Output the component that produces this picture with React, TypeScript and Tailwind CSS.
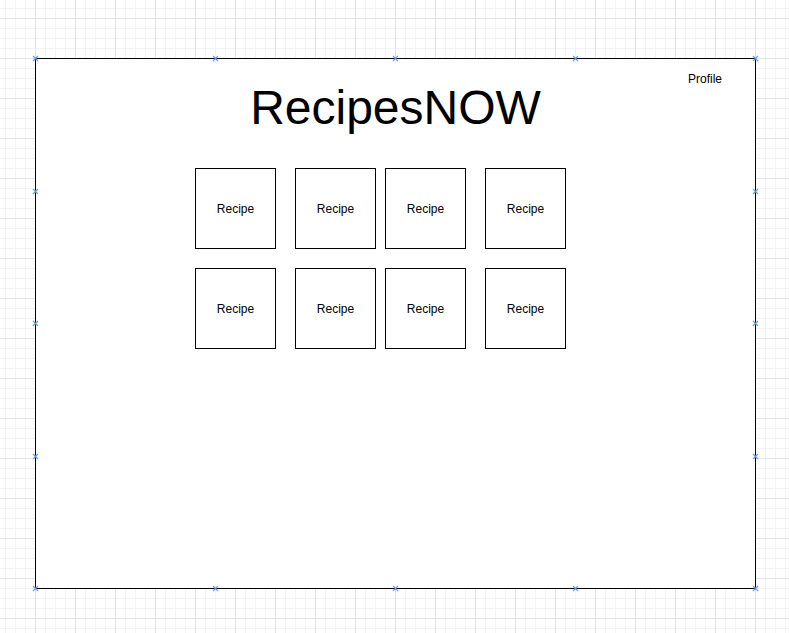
import React from "react";

const Marker = ({ x, y }: { x: number; y: number }) => (
  <svg
    className="absolute pointer-events-none"
    style={{ left: x - 3, top: y - 3 }}
    width="7"
    height="7"
    viewBox="0 0 7 7"
  >
    <path d="M1 1L6 6M6 1L1 6" stroke="#6d9ee0" strokeWidth="1.2" />
  </svg>
);

const Box = ({ className = "" }: { className?: string }) => (
  <div
    className={`w-[81px] h-[81px] border border-black bg-white flex items-center justify-center text-[12px] text-black ${className}`}
  >
    Recipe
  </div>
);

export default function App() {
  const xs = [35, 215, 395, 575, 755];
  const ys = [58, 191, 323, 456, 588];
  return (
    <div
      className="relative w-[789px] h-[633px] overflow-hidden bg-white [background-image:linear-gradient(to_right,#e4e4e4_1px,transparent_1px),linear-gradient(to_bottom,#e4e4e4_1px,transparent_1px),linear-gradient(to_right,#f3f3f3_1px,transparent_1px),linear-gradient(to_bottom,#f3f3f3_1px,transparent_1px)] [background-size:40px_40px,40px_40px,10px_10px,10px_10px] [background-position:35px_18px,35px_18px,5px_8px,5px_8px]"
      style={{ fontFamily: '"Liberation Sans", Arial, sans-serif' }}
    >
      <div className="pt-[58px] pl-[35px]">
        <div className="w-[721px] h-[531px] border border-black bg-white flex flex-col">
          <div className="flex justify-end pr-[33px] pt-[13px] h-[27px] text-[12px] leading-[14px] text-black">
            Profile
          </div>
          <div className="text-center text-[48px] leading-[56px] text-black -mt-[6px]">
            RecipesNOW
          </div>
          <div className="pl-[159px] pt-[32px] flex flex-col gap-[19px]">
            <div className="flex">
              <Box />
              <Box className="ml-[19px]" />
              <Box className="ml-[9px]" />
              <Box className="ml-[19px]" />
            </div>
            <div className="flex">
              <Box />
              <Box className="ml-[19px]" />
              <Box className="ml-[9px]" />
              <Box className="ml-[19px]" />
            </div>
          </div>
        </div>
      </div>
      {xs.map((x) => (
        <React.Fragment key={"h" + x}>
          <Marker x={x} y={58} />
          <Marker x={x} y={588} />
        </React.Fragment>
      ))}
      {ys.slice(1, 4).map((y) => (
        <React.Fragment key={"v" + y}>
          <Marker x={35} y={y} />
          <Marker x={755} y={y} />
        </React.Fragment>
      ))}
    </div>
  );
}
